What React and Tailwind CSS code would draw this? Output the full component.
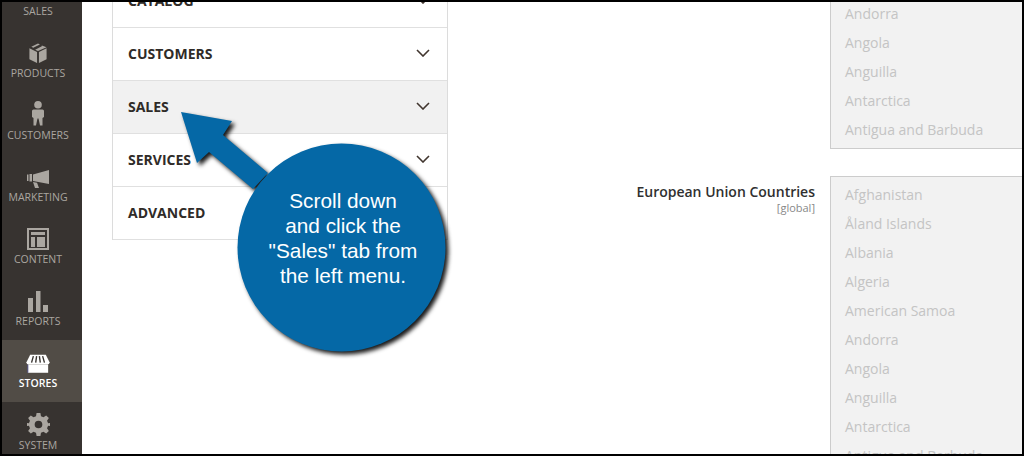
const open = { fontFamily: '"Open Sans", sans-serif' };

const BoxIcon = () => (
  <svg width="20" height="21" viewBox="0 0 20 22" fill="#aaa6a0">
    <path d="M10 0.5 L12 1.5 L5 5 L3 4 Z" />
    <path d="M14 2.5 L19 4.5 L10 8.5 L7 7 L14 3.5 Z" />
    <path d="M1 5.5 L9 9.5 L9 21 L1 17 Z" />
    <path d="M19 5.5 L11 9.5 L11 21 L19 17 Z" />
  </svg>
);
const PersonIcon = () => (
  <svg width="12" height="25" viewBox="0 0 12 25" fill="#aaa6a0">
    <circle cx="6" cy="3.8" r="3.8" />
    <path d="M1.5 8.5 H10.5 Q12 8.5 12 10 V16 L10.5 17 V24.5 L8 24.5 L6.5 17.5 H5.5 L4 24.5 L1.5 24.5 V17 L0 16 V10 Q0 8.5 1.5 8.5 Z" />
  </svg>
);
const MegaphoneIcon = () => (
  <svg width="22" height="18" viewBox="0 0 22 18" fill="#aaa6a0">
    <path d="M6 4.5 L22 0 V14 L6 11 Z" />
    <rect x="0" y="4.5" width="1.5" height="6.5" />
    <rect x="2.5" y="4" width="2.5" height="7.5" />
    <path d="M6 12 L10 12.8 L12 18 L8 18 Z" />
  </svg>
);
const ContentIcon = () => (
  <svg width="22" height="22" viewBox="0 0 22 22" fill="none" stroke="#aaa6a0" strokeWidth="2">
    <rect x="1" y="1" width="20" height="20" />
    <rect x="4" y="4" width="14" height="3" fill="#aaa6a0" stroke="none" />
    <rect x="4" y="9" width="4" height="10" fill="#aaa6a0" stroke="none" />
    <rect x="10" y="9" width="8" height="10" fill="#aaa6a0" stroke="none" />
  </svg>
);
const ReportsIcon = () => (
  <svg width="20" height="21" viewBox="0 0 20 21" fill="#aaa6a0">
    <rect x="0" y="7" width="5" height="14" />
    <rect x="8" y="0" width="4.5" height="21" />
    <rect x="15" y="14" width="5" height="7" />
  </svg>
);
const StoreIcon = () => (
  <svg width="24" height="20" viewBox="0 0 26 21">
    <path d="M2 11 H24 V20 H2 Z" fill="#fff" />
    <path d="M1.5 11 H2.5 V20 H1.5 Z" fill="#4a4a80" />
    <path d="M4.5 0.5 H21.5 L25.5 8.5 Q25.5 11 23 11 H3 Q0.5 11 0.5 8.5 Z" fill="#fff" />
    <path d="M8 2 L6 9 M11.5 2 L10.5 9 M14.5 2 L15.5 9 M18 2 L20 9" stroke="#3a3632" strokeWidth="1.5" fill="none" />
  </svg>
);
const GearIcon = () => (
  <svg width="23" height="23" viewBox="0 0 24 24" fill="#aaa6a0">
    <path
      fillRule="evenodd"
      d="M10 0 H14 L14.6 3.3 L17.2 4.4 L20 2.5 L22.8 5.3 L20.9 8 L22 10.6 L24 10.5 V13.5 L22 13.4 L20.9 16 L22.8 18.7 L20 21.5 L17.2 19.6 L14.6 20.7 L14 24 H10 L9.4 20.7 L6.8 19.6 L4 21.5 L1.2 18.7 L3.1 16 L2 13.4 L0 13.5 V10.5 L2 10.6 L3.1 8 L1.2 5.3 L4 2.5 L6.8 4.4 L9.4 3.3 Z M12 8 A4 4 0 1 0 12 16 A4 4 0 1 0 12 8 Z"
    />
  </svg>
);

const nav = [
  { label: 'PRODUCTS', Icon: BoxIcon },
  { label: 'CUSTOMERS', Icon: PersonIcon },
  { label: 'MARKETING', Icon: MegaphoneIcon },
  { label: 'CONTENT', Icon: ContentIcon },
  { label: 'REPORTS', Icon: ReportsIcon },
  { label: 'STORES', Icon: StoreIcon, active: true },
  { label: 'SYSTEM', Icon: GearIcon },
];

const Chevron = () => (
  <svg width="14" height="8" viewBox="0 0 14 8" fill="none" stroke="#41362f" strokeWidth="1.6">
    <path d="M1 1 L7 7 L13 1" />
  </svg>
);

const tabs = ['CATALOG', 'CUSTOMERS', 'SALES', 'SERVICES', 'ADVANCED'];

const list1 = ['Andorra', 'Angola', 'Anguilla', 'Antarctica', 'Antigua and Barbuda'];
const list2 = [
  'Afghanistan',
  'Åland Islands',
  'Albania',
  'Algeria',
  'American Samoa',
  'Andorra',
  'Angola',
  'Anguilla',
  'Antarctica',
  'Antigua and Barbuda',
];

const CountryItem = ({ name }) => (
  <div className="h-[29px] shrink-0 leading-[29px] pl-[14px] text-[14px] text-[#c4c4c4] whitespace-nowrap">{name}</div>
);

export default function App() {
  return (
    <div className="relative w-[1024px] h-[456px] border-2 border-black bg-white overflow-hidden flex" style={open}>
      <aside className="w-[80px] shrink-0 bg-[#373330] flex flex-col -mt-[34px]">
        <div className="h-[62px] shrink-0 flex flex-col items-center justify-end pb-[12px] pr-[8px] text-[10.5px] leading-[14px] text-[#aaa6a0]">SALES</div>
        {nav.map(({ label, Icon, active }) => (
          <div
            key={label}
            className={`h-[62px] shrink-0 flex flex-col items-center pr-[8px] ${active ? 'bg-[#514c46] text-white font-semibold' : 'text-[#aaa6a0]'}`}
          >
            <div className="h-[36px] shrink-0 flex items-end pb-[2px]">
              <Icon />
            </div>
            <span className="text-[10.5px] leading-[14px]">{label}</span>
          </div>
        ))}
      </aside>

      <main className="flex-1 flex items-start">
        <section className="ml-[30px] w-[336px] border-x border-[#dcdcdc] -mt-[27px] shrink-0">
          {tabs.map((t) => (
            <div
              key={t}
              className={`h-[53px] flex items-center justify-between pl-[15px] pr-[17px] pb-[2px] border-b border-[#e0e0e0] ${t === 'SALES' ? 'bg-[#f1f1f1]' : ''}`}
            >
              <span className="text-[14px] font-bold text-[#2f2b28]">{t}</span>
              <Chevron />
            </div>
          ))}
        </section>

        <section className="flex-1 flex flex-col items-end -mt-[4px]">
          <div className="w-[192px] h-[151px] border-l border-b border-[#cccccc] bg-[#f2f2f2] overflow-hidden flex flex-col justify-end pb-[4px]">
            {list1.map((c) => (
              <CountryItem key={c} name={c} />
            ))}
          </div>
          <div className="mt-[27px] w-full flex justify-end">
            <div className="text-right mr-[15px] pt-[7px]">
              <div className="text-[14px] leading-[17px] font-semibold text-[#303030]">European Union Countries</div>
              <div className="text-[11px] leading-[13px] mt-[1px] text-[#888888]">[global]</div>
            </div>
            <div className="w-[192px] h-[300px] border-l border-t border-[#cccccc] bg-[#f2f2f2] pt-[3px] overflow-hidden">
              {list2.map((c) => (
                <CountryItem key={c} name={c} />
              ))}
            </div>
          </div>
        </section>
      </main>

      {/* callout overlay */}
      <div className="absolute left-[175px] top-[106px] w-[282px] h-[256px]">
        <svg width="282" height="256" viewBox="177 108 282 256" className="absolute inset-0 drop-shadow-[3px_3px_2px_rgba(0,0,0,0.9)]">
          <path
            fill="#0568a6"
            d="M181 112 L232 121 L223 135 L268 173 L253 189 L209 152 L197 163 Z"
          />
          <circle cx="341.5" cy="247.5" r="104" fill="#0568a6" />
        </svg>
        <div
          className="absolute left-[66px] top-[80px] w-[200px] text-center text-white text-[20.8px] leading-[25px]"
          style={{ fontFamily: '"Liberation Sans", Arial, sans-serif' }}
        >
          <div>Scroll down</div>
          <div>and click the</div>
          <div>"Sales" tab from</div>
          <div>the left menu.</div>
        </div>
      </div>
    </div>
  );
}
